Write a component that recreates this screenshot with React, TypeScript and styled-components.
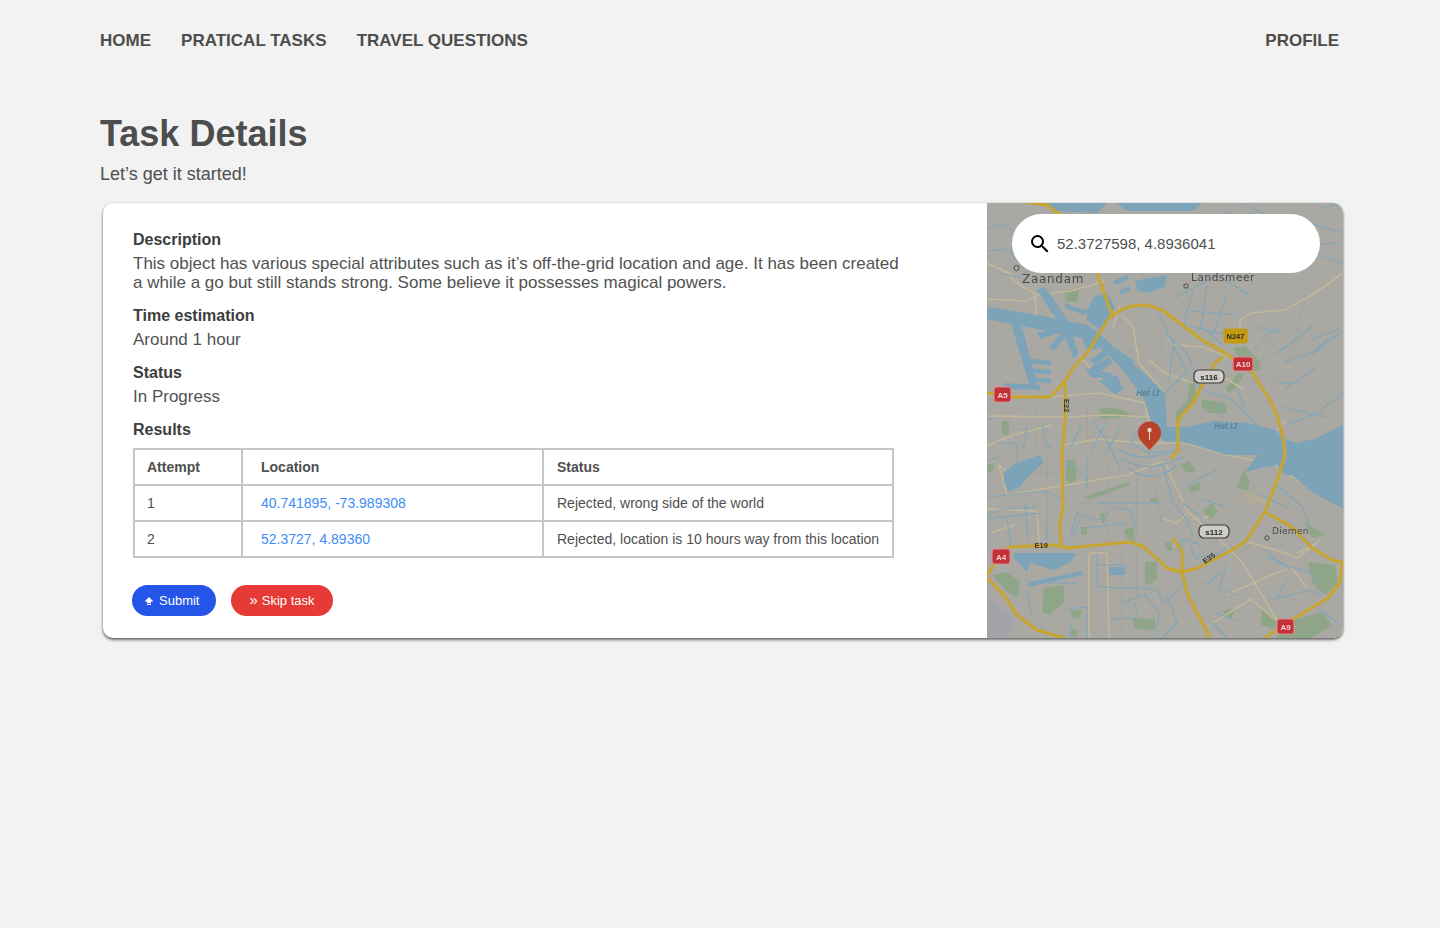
import React from 'react';
import styled, { createGlobalStyle } from 'styled-components';

const GlobalStyle = createGlobalStyle`
	html, body {
		margin: 0;
		padding: 0;
		background-color: #f2f2f2;
		font-family: "Liberation Sans", Arial, sans-serif;
		color: #4a4a4a;
	}
`;

const attempts = [
	{ id: 1, location: '40.741895, -73.989308', status: 'Rejected, wrong side of the world' },
	{ id: 2, location: '52.3727, 4.89360', status: 'Rejected, location is 10 hours way from this location' },
];

const water = [
	// Noordzeekanaal and the IJ
	'M0 104 L50 112 L100 122 L112 130 L133 150 L157 170 L178 190 L180 224 L198 224 L228 218 L261 220 L288 227 L298 236 L310 240 L330 235 L356 222 L356 306 L325 289 L305 272 L298 272 L290 262 L275 265 L258 269 L271 252 L240 252 L200 240 L176 238 L166 224 L157 196 L140 172 L120 150 L100 136 L50 126 L0 116 Z',
	// harbour docks
	'M23 117 L33 117 L50 180 L43 184 Z',
	'M40 155 L64 158 L64 162 L41 160 Z',
	'M42 165 L64 167 L64 171 L43 170 Z',
	'M43 174 L64 176 L64 180 L44 179 Z',
	'M17 180 L53 182 L54 187 L20 186 Z',
	'M50 87 L58 84 L84 122 L74 124 Z',
	'M77 100 L100 108 L98 112 L80 106 Z',
	'M50 130 L77 123 L78 128 L54 136 Z',
	'M62 144 L78 126 L82 130 L67 148 Z',
	'M75 124 L82 122 L92 152 L86 155 Z',
	'M100 107 L107 94 L120 90 L128 104 L120 117 L113 127 L100 117 Z',
	'M95 134 L108 130 L110 146 L100 148 Z',
	'M103 157 L120 145 L124 150 L108 162 Z',
	'M100 167 L122 154 L126 160 L108 172 Z',
	'M98 166 L124 170 L126 176 L104 174 Z',
	'M112 178 L130 172 L136 186 L128 192 Z',
	'M130 146 L148 158 L144 164 L128 152 Z',
	'M132 88 L142 83 L144 87 L134 92 Z',
	'M126 78 L140 72 L142 76 L128 82 Z',
	'M148 78 L180 72 L178 84 L160 90 L152 88 Z',
	// lakes
	'M17 269 L30 260 L53 252 L57 259 L43 272 L33 284 L22 289 L17 279 Z',
	'M27 350 L90 350 L83 359 L67 367 L43 360 L40 369 L27 355 Z',
	'M42 379 L95 368 L95 372 L42 384 Z',
	'M122 364 L138 364 L138 372 L122 372 Z',
	// top edge
	'M60 0 L120 0 L110 10 L70 8 Z',
	'M130 0 L215 0 L205 8 L140 8 Z',
];

const canals = [
	'M0 26 L14 20 L30 30 L24 50 L36 64', 'M0 48 L20 46', 'M14 70 L30 74 L46 66', 'M84 20 L100 34 L110 62', 'M255 0 L280 12 L322 20 L356 30', 'M240 8 L300 44 L350 40', 'M330 6 L356 0',
	'M304 42 L356 60', 'M150 90 L150 76', 'M0 217 L6 215', 'M0 258 L12 254', 'M10 240 L30 240 L30 260', 'M40 224 L36 246', 'M56 222 L58 240 L66 246', 'M94 222 L84 244',
	'M106 218 L120 238 L134 268', 'M120 218 L104 248', 'M134 222 L118 252', 'M152 224 L142 246', 'M144 240 L162 250 L180 248', 'M132 246 Q154 262 190 246',
	'M136 256 Q160 272 196 254', 'M142 266 Q168 282 190 262', 'M176 262 L186 300 L200 316 L206 332', 'M200 282 L216 274 L230 266', 'M186 96 L230 72 L262 92', 'M206 88 L196 124',
	'M220 82 L214 124 L236 142', 'M240 90 L226 132', 'M204 108 L250 112', 'M198 122 L240 132', 'M178 130 L200 150 L214 186', 'M186 144 L182 180', 'M170 108 L200 170',
	'M200 168 L178 190', 'M218 188 L244 196 L270 222', 'M230 200 L236 216', 'M250 186 L258 206', 'M268 146 L284 128 L296 126', 'M270 124 L292 130', 'M286 152 L310 136 L326 122',
	'M324 152 L340 138 L354 130', 'M326 136 L352 126', 'M328 146 L350 132', 'M296 160 L340 144', 'M290 180 L310 180', 'M296 204 L320 210 L340 214', 'M300 222 L330 210 L356 190', 'M298 186 L330 164',
	'M0 294 L20 292 L56 288 L80 298', 'M0 312 L16 306 L50 304', 'M0 316 L54 310', 'M20 316 L24 342', 'M38 300 L40 328', 'M60 320 L60 338', 'M84 330 L90 310 L110 318 L130 304 L144 308 L150 330',
	'M84 338 L94 314', 'M100 325 L140 320', 'M80 260 L96 272', 'M100 255 L100 286', 'M110 300 L174 300', 'M110 352 L110 384 L170 386 L176 400', 'M110 362 L140 362', 'M134 400 L158 392 L172 410 L168 432',
	'M40 388 L44 412', 'M60 380 L92 380', 'M80 406 L100 404 L100 435', 'M84 420 L84 435', 'M124 416 L150 415', 'M148 400 L150 412', 'M196 300 L216 316', 'M190 352 L196 336 L214 342',
	'M204 342 L208 356 L220 352', 'M212 366 L240 344', 'M240 360 L232 386 L250 392', 'M218 382 L234 370', 'M180 392 L190 420 L176 435', 'M178 400 L196 380', 'M230 410 L250 418', 'M226 420 L240 435',
	'M278 347 L295 362 L322 369 L334 380', 'M285 397 L322 387 L334 392', 'M300 376 L290 395', 'M275 352 L300 362', 'M268 290 L300 304', 'M290 282 L316 304 L322 324', 'M330 404 L350 420', 'M240 304 L226 300 L216 296',
];

const streets = [
	'M0 96 L40 98 L50 92 L84 88 L118 78', 'M48 92 L50 124', 'M16 68 L36 84 L50 92', 'M0 60 L30 74', 'M253 127 L253 117 L265 110 L298 107 L328 90 L356 70', 'M0 192 L63 194 L112 190 L158 200 L162 220', 'M0 213 L80 214 L120 212 L164 214',
	'M0 243 L26 232 L66 222', 'M76 242 L112 236 L152 240 L198 240 L240 252 L288 262 L356 306', 'M20 269 L12 262 L20 292 L140 272', 'M178 259 L188 282 L201 309 L231 335 L255 359 L275 392 L291 419',
	'M140 272 L176 258', 'M0 306 L50 308 L52 340', 'M102 350 L120 350 L122 435', 'M102 350 L102 435', 'M261 339 L295 349 L311 355 L334 336', 'M200 310 L190 320 L176 316', 'M206 316 L222 314',
	'M135 112 L146 124 L152 160 L178 190', 'M133 102 L126 125', 'M65 110 L92 152 L130 195', 'M178 130 L186 142 L216 144 L246 156', 'M216 180 L240 176 L256 186', 'M206 180 L178 170 L160 156',
	'M190 236 L230 244', 'M298 218 L280 240 L278 252', 'M240 392 L275 376 L300 366', 'M226 420 L264 396 L292 420', 'M310 350 L330 340', 'M304 364 L320 385', 'M4 330 L28 322',
];

const minorStreets = [
	'M48 200 L48 250', 'M100 200 L100 240', 'M0 226 L50 226', 'M140 30 L158 80', 'M140 150 L170 130 L178 160', 'M290 120 L262 190 L280 200 L290 170', 'M320 90 L300 160', 'M340 200 L320 230',
	'M40 270 L70 270', 'M40 290 L40 340', 'M60 250 L60 340', 'M120 260 L120 340', 'M90 300 L150 300', 'M150 260 L150 330', 'M160 240 L174 320', 'M204 370 L240 400', 'M240 280 L260 330', 'M178 400 L230 400',
	'M40 400 L60 435', 'M135 345 L135 435', 'M150 345 L150 400', 'M280 370 L310 400', 'M300 330 L270 300', 'M250 350 L270 340',
];

const greens = [
	'M77 88 L92 86 L90 99 L79 99 Z', 'M112 206 L126 204 L142 210 L144 214 L114 216 Z', 'M246 145 L258 143 L272 158 L274 166 L262 170 L254 158 Z', 'M249 172 L258 170 L248 186 L240 190 L240 184 Z',
	'M203 178 L208 176 L208 200 L190 218 L188 210 L200 198 Z', 'M215 196 L238 200 L240 210 L222 210 L215 204 Z', 'M15 218 L22 218 L22 232 L15 232 Z', 'M0 262 L7 260 L7 267 L0 270 Z',
	'M80 257 L88 257 L90 275 L83 282 L78 275 Z', 'M97 294 L142 279 L143 282 L103 297 Z', 'M113 310 L118 310 L118 320 L115 320 Z', 'M93 324 L100 324 L100 332 L95 332 Z', 'M137 327 L147 324 L148 339 L140 335 Z',
	'M158 359 L170 359 L170 375 L163 382 L158 380 Z', 'M5 372 L20 369 L33 379 L30 395 L20 389 Z', 'M57 385 L77 382 L77 399 L63 412 L55 409 Z', 'M83 407 L95 407 L92 416 L85 414 Z', 'M145 415 L168 416 L168 427 L148 426 Z',
	'M84 426 L90 426 L90 434 L84 434 Z', 'M163 295 L171 295 L171 299 L163 300 Z', 'M201 284 L213 279 L213 287 L205 289 Z', 'M193 262 L202 258 L210 268 L200 270 Z',
	'M250 285 L256 267 L263 279 L260 287 Z', 'M216 307 L225 300 L231 309 L223 317 Z', 'M321 359 L348 362 L351 379 L338 392 L325 379 Z', 'M275 406 L291 416 L287 426 L274 422 Z',
	'M298 419 L335 409 L345 422 L321 437 L288 437 Z', 'M318 319 L338 332 L325 335 Z', 'M178 340 L184 338 L186 348 L180 348 Z', 'M236 407 L248 406 L244 416 L238 414 Z',
];

const highways = [
	'M74 342 L73 319 L76 305 L75 252 L78 220 L78 178 Q84 166 100 150 L122 115 Q136 103 153 102 Q166 102 178 109 L191 119 L215 137 L238 150 L265 169 L281 194 Q296 220 298 252 L291 275 L278 309 L258 339 L245 347 L211 365 L195 369 L178 365',
	'M0 372 L13 352 L23 344 L67 342 L80 345 L143 339 L157 344 L180 365 L195 369', 'M0 375 L17 392 L30 412 L50 427 L77 435', 'M186 335 L195 349 L195 369 L201 392 L223 435',
	'M280 310 L305 324 L325 345 L345 357 L355 359 L353 379 L341 395 L308 415 L275 437', 'M236 154 L228 160 L211 190 L206 200 L191 217 L191 247 L184 256', 'M125 112 L110 70 L73 12 L60 2 L30 -2',
	'M0 190 L26 194 L63 194 L78 178',
];

const shields = [
	{ x: 237, y: 126, w: 23, h: 14, fill: '#c49a10', color: '#2b2b2b', text: 'N247', border: '#c49a10', size: 7.5 },
	{ x: 246, y: 154, w: 20, h: 14, fill: '#c33038', color: '#f0d4d4', text: 'A10', border: '#d98d90', size: 8 },
	{ x: 207, y: 167, w: 30, h: 13, fill: '#cfcdc9', color: '#222', text: 's116', border: '#3a3a3a', size: 8, pill: true },
	{ x: 7, y: 184, w: 17, h: 15, fill: '#c33038', color: '#f0d4d4', text: 'A5', border: '#d98d90', size: 8 },
	{ x: 212, y: 322, w: 30, h: 13, fill: '#cfcdc9', color: '#222', text: 's112', border: '#3a3a3a', size: 8, pill: true },
	{ x: 5, y: 346, w: 18, h: 15, fill: '#c33038', color: '#f0d4d4', text: 'A4', border: '#d98d90', size: 8 },
	{ x: 290, y: 416, w: 17, h: 15, fill: '#c33038', color: '#f0d4d4', text: 'A9', border: '#d98d90', size: 8 },
];

const MapDrawing: React.FC = () => (
	<MapSvg viewBox='0 0 356 435' preserveAspectRatio='none'>
		<rect width='356' height='435' fill='#aaa8a3' />
		<path d='M0 392 L10 402 L28 415 L20 435 L0 435 Z' fill='#a2a4a9' />
		<path d='M255 290 L275 290 L280 300 L262 302 Z' fill='#b3aa97' />
		{greens.map((d) => (
			<path key={d} d={d} fill='#8fa588' />
		))}
		<g fill='none' stroke='#a19f99' strokeWidth='0.7'>
			{minorStreets.map((d) => (
				<path key={d} d={d} />
			))}
		</g>
		<g fill='none' stroke='#c1b899' strokeWidth='1.6'>
			{streets.map((d) => (
				<path key={d} d={d} />
			))}
		</g>
		<g fill='none' stroke='#7ea6bb' strokeWidth='1.1'>
			{canals.map((d) => (
				<path key={d} d={d} />
			))}
		</g>
		{water.map((d) => (
			<path key={d} d={d} fill='#7ca3b8' />
		))}
		<g fill='none' stroke='#c8a52d' strokeWidth='3' strokeLinejoin='round'>
			{highways.map((d) => (
				<path key={d} d={d} />
			))}
		</g>
		{shields.map((s) => (
			<g key={s.text}>
				<rect x={s.x} y={s.y} width={s.w} height={s.h} rx={s.pill ? 5 : 2.5} fill={s.fill} stroke={s.border} strokeWidth='1.2' />
				<text x={s.x + s.w / 2} y={s.y + s.h / 2 + 3} textAnchor='middle' fontSize={s.size} fontWeight='700' fill={s.color} fontFamily='"Liberation Sans", sans-serif'>
					{s.text}
				</text>
			</g>
		))}
		<g fontFamily='"DejaVu Sans", sans-serif' fill='#4a4a48'>
			<text x='35' y='80' fontSize='12' letterSpacing='0.7'>Zaandam</text>
			<text x='204' y='78' fontSize='10.5' letterSpacing='0.6'>Landsmeer</text>
			<text x='285' y='331' fontSize='9' letterSpacing='0.3'>Diemen</text>
		</g>
		<g fontFamily='"Liberation Sans", sans-serif' fontWeight='700' fontSize='7.5' fill='#33332f'>
			<text x='47.5' y='344.5'>E19</text>
			<text transform='translate(218 361) rotate(-35)'>E35</text>
			<text transform='translate(77 196) rotate(90)'>E22</text>
		</g>
		<g fontFamily='"Liberation Sans", sans-serif' fontStyle='italic' fontWeight='700' fontSize='8.5' fill='#5b8198'>
			<text x='149' y='193'>Het IJ</text>
			<text x='227' y='226'>Het IJ</text>
		</g>
		<circle cx='29.5' cy='65' r='2.6' fill='none' stroke='#4a4a48' strokeWidth='1' />
		<circle cx='199' cy='83' r='2.2' fill='none' stroke='#4a4a48' strokeWidth='1' />
		<circle cx='280' cy='335' r='2.2' fill='none' stroke='#4a4a48' strokeWidth='1' />
		<path d='M162.5 247 C155 239 151 236 151 230 A11.5 11.5 0 1 1 174 230 C174 236 170 239 162.5 247 Z' fill='#b8432a' />
		<circle cx='162.5' cy='227' r='2.2' fill='#e6d8d0' />
		<path d='M162.5 228 L162.5 237' stroke='#e6d8d0' strokeWidth='1' />
	</MapSvg>
);

const App: React.FC = () => (
	<Page>
		<GlobalStyle />
		<Nav>
			<NavLink>HOME</NavLink>
			<NavLink>PRATICAL TASKS</NavLink>
			<NavLink>TRAVEL QUESTIONS</NavLink>
			<ProfileLink>PROFILE</ProfileLink>
		</Nav>
		<Heading>Task Details</Heading>
		<Subtitle>Let’s get it started!</Subtitle>
		<Card>
			<Details>
				<Section>
					<Label>Description</Label>
					<Paragraph>
						This object has various special attributes such as it’s off-the-grid location and age. It has been created a while a go but still stands strong. Some believe it possesses magical powers.
					</Paragraph>
				</Section>
				<Section>
					<Label>Time estimation</Label>
					<Value>Around 1 hour</Value>
				</Section>
				<Section>
					<Label>Status</Label>
					<Value>In Progress</Value>
				</Section>
				<Label>Results</Label>
				<ResultsTable>
					<thead>
						<tr>
							<HeadCell>Attempt</HeadCell>
							<HeadCell>Location</HeadCell>
							<HeadCell>Status</HeadCell>
						</tr>
					</thead>
					<tbody>
						{attempts.map((attempt) => (
							<tr key={attempt.id}>
								<Cell>{attempt.id}</Cell>
								<Cell>
									<LocationLink>{attempt.location}</LocationLink>
								</Cell>
								<Cell>{attempt.status}</Cell>
							</tr>
						))}
					</tbody>
				</ResultsTable>
				<Actions>
					<PillButton color='#2455e8'>
						<svg width='10' height='10' viewBox='0 0 10 10'>
							<path d='M5 1 L9.5 5.5 L7 5.5 L7 7 L3 7 L3 5.5 L0.5 5.5 Z M3 7.8 L7 7.8 L7 9 L3 9 Z' fill='#fff' />
						</svg>
						Submit
					</PillButton>
					<SkipButton color='#e63a36'>
						<Chevrons>»</Chevrons>
						Skip task
					</SkipButton>
				</Actions>
			</Details>
			<MapPanel>
				<MapDrawing />
				<SearchBox>
					<svg width='24' height='24' viewBox='0 0 24 24'>
						<path
							d='M15.5 14h-.79l-.28-.27A6.471 6.471 0 0 0 16 9.5 6.5 6.5 0 1 0 9.5 16c1.61 0 3.09-.59 4.23-1.57l.27.28v.79l5 4.99L20.49 19l-4.99-5zm-6 0C7.01 14 5 11.99 5 9.5S7.01 5 9.5 5 14 7.01 14 9.5 11.99 14 9.5 14z'
							fill='#000'
						/>
					</svg>
					<SearchText>52.3727598, 4.8936041</SearchText>
				</SearchBox>
			</MapPanel>
		</Card>
	</Page>
);

const Page = styled.div`
	min-height: 928px;
	box-sizing: border-box;
	padding: 1px 97px 0 100px;
	background-color: #f2f2f2;
`;

const Nav = styled.nav`
	display: flex;
	align-items: center;
	gap: 30.1px;
	height: 80px;
	padding-right: 4px;
`;

const NavLink = styled.a`
	font-size: 17px;
	font-weight: 700;
	color: #4d4d4d;
`;

const ProfileLink = styled(NavLink)`
	margin-left: auto;
`;

const Heading = styled.h1`
	margin: 30px 0 0;
	font-size: 36px;
	line-height: 46px;
	font-weight: 700;
	color: #4d4d4d;
`;

const Subtitle = styled.p`
	margin: 6px 0 0;
	font-size: 18px;
	line-height: 22px;
	color: #4f4f4f;
`;

const Card = styled.section`
	display: flex;
	height: 435px;
	margin: 18px 0 0 3px;
	background-color: #fff;
	border-radius: 10px;
	box-shadow: 0 2px 3px rgba(0, 0, 0, 0.55), 0 0 2px rgba(0, 0, 0, 0.2);
	overflow: hidden;
`;

const Details = styled.div`
	flex: 0 0 884px;
	box-sizing: border-box;
	padding: 27px 30px 0;
`;

const Section = styled.div`
	margin-bottom: 14px;
`;

const Label = styled.h3`
	margin: 0;
	font-size: 16px;
	line-height: 19px;
	font-weight: 700;
	color: #3d3d3d;
`;

const Paragraph = styled.p`
	margin: 5px 0 0;
	width: 770px;
	font-size: 17px;
	line-height: 19px;
	color: #525252;
`;

const Value = styled(Paragraph)`
	margin-top: 5px;
`;

const ResultsTable = styled.table`
	width: 761px;
	margin: 9px 0 0;
	border-collapse: collapse;
	table-layout: fixed;
	font-size: 14px;
	color: #4f4f4f;

	th:nth-child(1) {
		width: 108px;
	}
	th:nth-child(2) {
		width: 301px;
	}
`;

const HeadCell = styled.th`
	height: 36px;
	box-sizing: border-box;
	padding: 0 13px 0 12px;
	border: 2px solid #c6c6c6;
	text-align: left;
	font-weight: 700;

	&:nth-child(2) {
		padding-left: 18px;
	}
	&:nth-child(3) {
		padding-left: 13px;
	}
`;

const Cell = styled.td`
	height: 36px;
	box-sizing: border-box;
	padding: 0 13px 0 12px;
	border: 2px solid #c6c6c6;
	white-space: nowrap;

	&:nth-child(2) {
		padding-left: 18px;
	}
	&:nth-child(3) {
		padding-left: 13px;
	}
`;

const LocationLink = styled.a`
	color: #3d8ef8;
`;

const Actions = styled.div`
	display: flex;
	gap: 15px;
	margin: 27px 0 0 -1px;
`;

const PillButton = styled.button<{ color: string }>`
	display: inline-flex;
	align-items: center;
	justify-content: center;
	gap: 5px;
	height: 31px;
	padding: 0 17px 0 12px;
	border: none;
	border-radius: 16px;
	background-color: ${({ color }) => color};
	color: #fff;
	font-family: inherit;
	font-size: 13px;
`;

const SkipButton = styled(PillButton)`
	gap: 4px;
	padding: 0 18px;
`;

const Chevrons = styled.span`
	font-size: 15px;
	line-height: 1;
	margin-top: -2px;
`;

const MapPanel = styled.div`
	position: relative;
	flex: 1;
	min-width: 0;
`;

const MapSvg = styled.svg`
	display: block;
	width: 100%;
	height: 100%;
	filter: blur(0.45px);
`;

const SearchBox = styled.div`
	position: absolute;
	top: 11px;
	left: 25px;
	display: flex;
	align-items: center;
	gap: 5px;
	width: 308px;
	height: 59px;
	box-sizing: border-box;
	padding-left: 16px;
	border-radius: 30px;
	background-color: #fff;
`;

const SearchText = styled.span`
	font-size: 15px;
	color: #4f4f4f;
`;

export default App;
